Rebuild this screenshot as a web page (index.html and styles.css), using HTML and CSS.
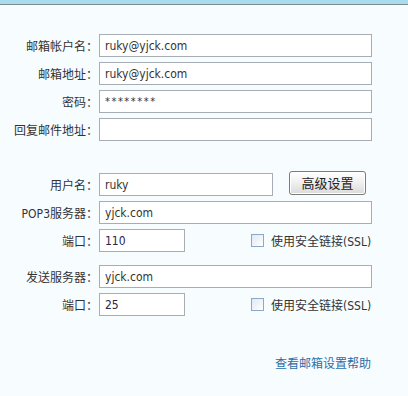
FILE: index.html
```html
<!DOCTYPE html>
<html lang="zh-CN">
<head>
<meta charset="utf-8">
<title>邮箱设置</title>
<link rel="stylesheet" href="styles.css">
</head>
<body>
<div class="topbar"></div>
<form class="form">
  <div class="group g1">
    <div class="row"><span class="lbl">邮箱帐户名：</span><input class="field wide" type="text" value="ruky@yjck.com"></div>
    <div class="row"><span class="lbl">邮箱地址：</span><input class="field wide" type="text" value="ruky@yjck.com"></div>
    <div class="row"><span class="lbl">密码：</span><input class="field wide pwd" type="text" value="********"></div>
    <div class="row"><span class="lbl">回复邮件地址：</span><input class="field wide" type="text" value=""></div>
  </div>
  <div class="group g2">
    <div class="row"><span class="lbl">用户名：</span><input class="field mid" type="text" value="ruky"><button class="btn" type="button">高级设置</button></div>
    <div class="row"><span class="lbl">POP3服务器：</span><input class="field wide" type="text" value="yjck.com"></div>
    <div class="row"><span class="lbl">端口：</span><input class="field short" type="text" value="110"><span class="check"><span class="box"></span><span class="ctext">使用安全链接(SSL)</span></span></div>
  </div>
  <div class="group g3">
    <div class="row"><span class="lbl">发送服务器：</span><input class="field wide" type="text" value="yjck.com"></div>
    <div class="row"><span class="lbl">端口：</span><input class="field short" type="text" value="25"><span class="check"><span class="box"></span><span class="ctext">使用安全链接(SSL)</span></span></div>
  </div>
  <div class="help"><a class="helplink" href="#">查看邮箱设置帮助</a></div>
</form>
</body>
</html>
```
FILE: styles.css
```css
html, body {
  margin: 0;
  padding: 0;
  background: #f7fcff;
}
body {
  width: 408px;
  height: 396px;
  overflow: hidden;
  font-family: "DejaVu Sans Condensed", "Noto Sans CJK SC", sans-serif;
  font-size: 12px;
  color: #333;
}
.topbar {
  height: 4px;
  background: #a9dcec;
  border-bottom: 1px solid #7d8b90;
}
.form {
  display: flex;
  flex-direction: column;
  margin: 0;
}
.group {
  display: flex;
  flex-direction: column;
  gap: 5px;
}
.g1 { margin-top: 29px; }
.g2 { margin-top: 32px; }
.g3 { margin-top: 13px; }
.row {
  display: flex;
  align-items: center;
  height: 23px;
}
.lbl {
  width: 98px;
  margin-right: 1px;
  text-align: right;
  font-family: "DejaVu Sans Condensed", "Noto Sans CJK SC", sans-serif;
  font-size: 12px;
  color: #333;
  white-space: nowrap;
}
.field {
  box-sizing: border-box;
  height: 23px;
  margin: 0;
  padding: 0 0 0 5px;
  border: 1px solid #a6adb4;
  border-radius: 0;
  background: #fff;
  font-family: "DejaVu Sans Condensed", "DejaVu Sans", sans-serif;
  font-size: 12px;
  color: #333;
  outline: none;
}
.wide { width: 273px; }
.mid { width: 174px; }
.short { width: 86px; color: #2e2448; }
.pwd { font-size: 11px; letter-spacing: 1.5px; }
.btn {
  box-sizing: border-box;
  width: 77px;
  height: 24px;
  margin: -4px 0 0 16px;
  padding: 0;
  border: 1px solid #7c7c7c;
  border-radius: 3px;
  background: linear-gradient(#ffffff, #f1f1f1 45%, #dadada);
  font-family: "Noto Sans CJK SC", sans-serif;
  font-size: 13px;
  color: #222;
  box-shadow: inset 0 0 0 1px #fff;
}
.check {
  display: flex;
  align-items: center;
  margin-left: 66px;
}
.box {
  box-sizing: border-box;
  width: 13px;
  height: 13px;
  border: 1px solid #8da8c6;
  background: linear-gradient(135deg, #dfe8f2, #ffffff);
}
.ctext {
  margin-left: 7px;
  font-family: "DejaVu Sans Condensed", "Noto Sans CJK SC", sans-serif;
  font-size: 12px;
  color: #333;
}
.help {
  display: flex;
  justify-content: flex-end;
  padding-right: 37px;
  margin-top: 38px;
}
.helplink {
  font-family: "Noto Sans CJK SC", sans-serif;
  font-size: 12px;
  color: #2a6ea6;
  text-decoration: none;
}
```
